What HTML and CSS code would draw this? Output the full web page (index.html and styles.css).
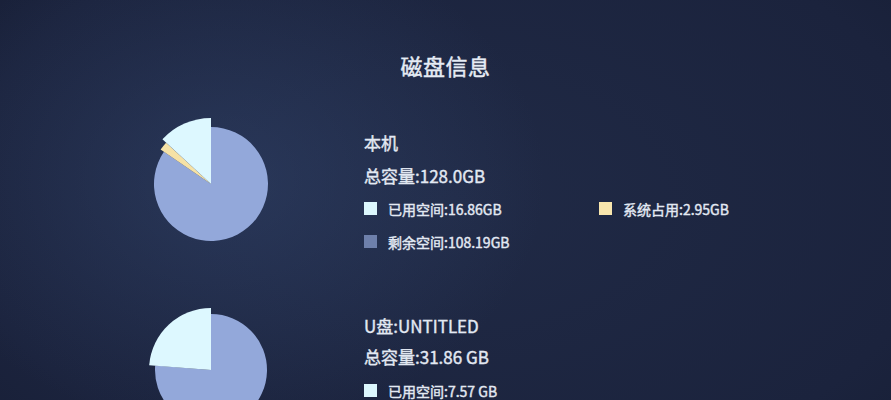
FILE: index.html
```html
<!DOCTYPE html>
<html lang="zh-CN">
<head>
<meta charset="utf-8">
<title>磁盘信息</title>
<link rel="stylesheet" href="styles.css">
</head>
<body>
<div class="screen">
  <h1 class="title">磁盘信息</h1>

  <section class="disk disk-local">
    <svg class="pie" width="140" height="140" viewBox="0 0 140 140">
      <path class="slice-free" d="M70,70 L22.91,37.87 A57,57 0 1 0 70,13 Z"/>
      <path class="slice-sys" d="M70,70 L25.10,28.71 A61,61 0 0 0 19.61,35.62 Z"/>
      <path class="slice-used" d="M70,70 L70,4 A66,66 0 0 0 21.42,25.32 Z"/>
    </svg>
    <div class="info">
      <div class="row name">本机</div>
      <div class="row total">总容量:128.0GB</div>
      <div class="row legend">
        <div class="item"><span class="sw sw-used"></span><span>已用空间:16.86GB</span></div>
        <div class="item"><span class="sw sw-sys"></span><span>系统占用:2.95GB</span></div>
      </div>
      <div class="row legend">
        <div class="item"><span class="sw sw-free"></span><span>剩余空间:108.19GB</span></div>
      </div>
    </div>
  </section>

  <section class="disk disk-usb">
    <svg class="pie" width="140" height="140" viewBox="0 0 140 140">
      <path class="slice-free" d="M70,70 L14.17,65.60 A56,56 0 1 0 70,14 Z"/>
      <path class="slice-used" d="M70,70 L70,8 A62,62 0 0 0 8.19,65.13 Z"/>
    </svg>
    <div class="info">
      <div class="row name">U盘:UNTITLED</div>
      <div class="row total">总容量:31.86 GB</div>
      <div class="row legend last">
        <div class="item"><span class="sw sw-used"></span><span>已用空间:7.57 GB</span></div>
      </div>
    </div>
  </section>
</div>
</body>
</html>
```

FILE: styles.css
```css
html, body {
  margin: 0;
  padding: 0;
  width: 891px;
  height: 400px;
  overflow: hidden;
}

body {
  font-family: "Noto Sans CJK SC", "Noto Sans", "Liberation Sans", sans-serif;
  color: #e3e9f3;
  background-color: #1c2540;
  background-image:
    radial-gradient(ellipse 320px 250px at 225px 180px, rgba(58, 80, 124, 0.4), rgba(58, 80, 124, 0) 100%),
    radial-gradient(ellipse 700px 420px at 450px 200px, #202a46 0%, #1b233d 70%, #161d33 100%);
}

.screen {
  display: flex;
  flex-direction: column;
  width: 891px;
  height: 400px;
}

.title {
  margin: 49px 0 0 0;
  font-size: 22px;
  line-height: 32px;
  font-weight: normal;
  text-align: center;
  color: #e6ecf5;
  letter-spacing: 0.5px;
  -webkit-text-stroke: 0.45px #e6ecf5;
}

.disk {
  display: flex;
  align-items: flex-start;
  gap: 83px;
  padding-left: 141px;
  height: 140px;
}

.disk-local {
  margin-top: 33px;
}

.disk-usb {
  margin-top: 46px;
}

.pie {
  flex: none;
  display: block;
}

.slice-free { fill: #93a8da; }
.slice-used { fill: #ddf8ff; }
.slice-sys { fill: #f6e2a6; }

.info {
  display: flex;
  flex-direction: column;
  padding-top: 12px;
  font-weight: normal;
  -webkit-text-stroke: 0.4px #e3e9f3;
}

.disk-usb .info {
  padding-top: 10px;
}

.row {
  height: 33px;
  display: flex;
  align-items: center;
}

.disk-usb .row {
  height: 31px;
}

.disk-usb .row.last {
  height: 37px;
}

.name, .total {
  font-size: 17px;
}

.legend {
  font-size: 14px;
}

.item {
  display: flex;
  align-items: center;
  gap: 11px;
  width: 235px;
}

.sw {
  width: 13px;
  height: 13px;
  flex: none;
}

.sw-used { background: #dcf7fd; }
.sw-sys { background: #f8e6ad; }
.sw-free { background: #6e80ab; }
```
